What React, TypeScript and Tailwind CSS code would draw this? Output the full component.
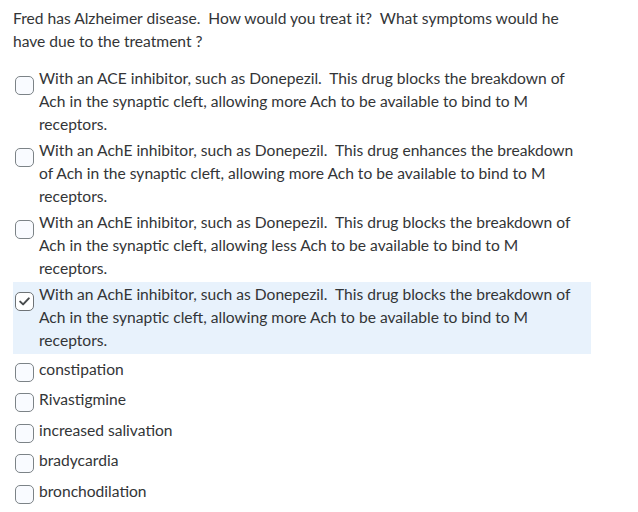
const question =
  "Fred has Alzheimer disease.\u00a0 How would you treat it?\u00a0 What symptoms would he have due to the treatment ?";

type Option = { text: string; checked?: boolean };

const longOptions: Option[] = [
  {
    text: "With an ACE inhibitor, such as Donepezil.\u00a0 This drug blocks the breakdown of Ach in the synaptic cleft, allowing more Ach to be available to bind to M receptors.",
  },
  {
    text: "With an AchE inhibitor, such as Donepezil.\u00a0 This drug enhances the breakdown of Ach in the synaptic cleft, allowing more Ach to be available to bind to M receptors.",
  },
  {
    text: "With an AchE inhibitor, such as Donepezil.\u00a0 This drug blocks the breakdown of Ach in the synaptic cleft, allowing less Ach to be available to bind to M receptors.",
  },
  {
    text: "With an AchE inhibitor, such as Donepezil.\u00a0 This drug blocks the breakdown of Ach in the synaptic cleft, allowing more Ach to be available to bind to M receptors.",
    checked: true,
  },
];

const shortOptions = [
  "constipation",
  "Rivastigmine",
  "increased salivation",
  "bradycardia",
  "bronchodilation",
];

function Checkbox({ checked }: { checked?: boolean }) {
  return (
    <span
      className={`flex h-[19px] w-[19px] shrink-0 items-center justify-center rounded-[5px] border ${
        checked ? "border-[#6e7376] bg-white" : "border-[#7c8387] bg-[#f9fbff]"
      }`}
    >
      {checked && (
        <svg width="11" height="9" viewBox="0 0 11 9" fill="none">
          <path
            d="M1.2 4.6 L4.1 7.4 L9.8 1.4"
            stroke="#494c4e"
            strokeWidth="2"
            strokeLinecap="round"
            strokeLinejoin="round"
          />
        </svg>
      )}
    </span>
  );
}

export default function App() {
  return (
    <div
      className="min-h-screen bg-white px-[13px] pt-[7px] text-[15.6px] text-[#333537]"
      style={{ fontFamily: "Lato, 'Open Sans', sans-serif" }}
    >
      <p className="w-[578px] leading-[23px]">{question}</p>

      <div className="mt-[13px] flex w-[578px] flex-col">
        {longOptions.map((o, i) => (
          <label
            key={i}
            className={`flex items-start pb-[2px] pl-[2px] pr-[12px] pt-[1px] leading-[23px] ${
              o.checked ? "bg-[#e8f2fc]" : ""
            }`}
          >
            <span className="mt-[9px]">
              <Checkbox checked={o.checked} />
            </span>
            <span className="ml-[5px]">{o.text}</span>
          </label>
        ))}

        <div className="mt-px flex flex-col">
          {shortOptions.map((t) => (
            <label key={t} className="flex h-[30.4px] items-start pl-[2px] pt-[3px] leading-[23px]">
              <span className="mt-[5px]">
                <Checkbox />
              </span>
              <span className="ml-[5px]">{t}</span>
            </label>
          ))}
        </div>
      </div>
    </div>
  );
}
